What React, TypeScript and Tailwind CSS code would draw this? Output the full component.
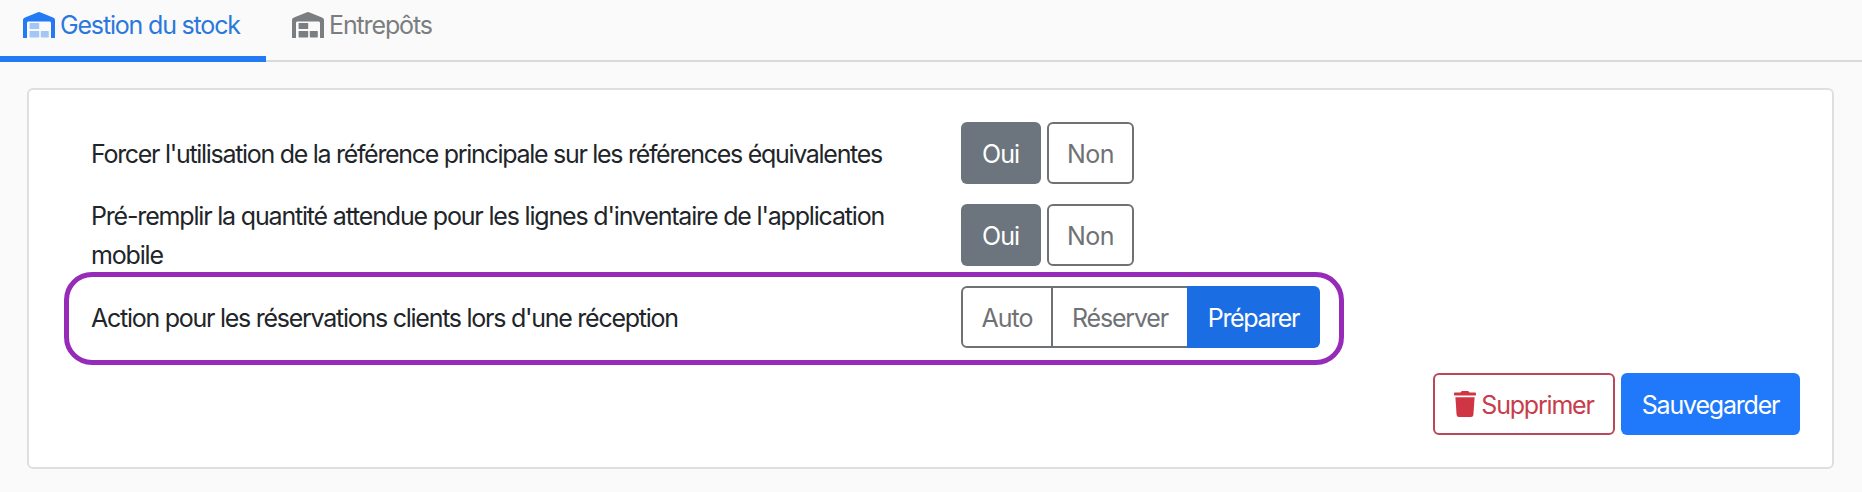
import type { ReactNode } from "react";

function WarehouseIcon({ duotone = false }: { duotone?: boolean }) {
  return (
    <svg viewBox="0 0 32 26" className="h-[26px] w-8 shrink-0" fill="currentColor" aria-hidden="true">
      <path d="M0 25.5V8.2C0 6.8.8 5.900 2 5.400L15 .3a3 3 0 0 1 2 0L30 5.400c1.200.5 2 1.400 2 2.800V25.500a.5.500 0 0 1-.5.500H28.500a.5.500 0 0 1-.5-.5V11c0-1-.6-1.600-1.600-1.600H5.600C4.600 9.400 4 10 4 11V25.500a.5.500 0 0 1-.5.500H.5a.5.500 0 0 1-.5-.5Z" />
      <g opacity={duotone ? 0.4 : 1}>
        <rect x="6.600" y="11" width="9.600" height="6" rx=".6" />
        <rect x="6.600" y="19" width="9.600" height="6.400" rx=".6" />
        <rect x="17.800" y="19" width="8" height="6.400" rx=".6" />
      </g>
    </svg>
  );
}

function TrashIcon() {
  return (
    <svg viewBox="0 0 22 26" className="h-[26px] w-[22px] shrink-0" fill="currentColor" aria-hidden="true">
      <path d="M.8 1.500H6.500L7.200.6C7.500.2 7.900 0 8.400 0h5.200c.5 0 .9.200 1.200.6l.7.900h5.700c.5 0 .8.300.8.800v1.400c0 .5-.3.800-.8.800H.8C.3 4.500 0 4.200 0 3.700V2.300c0-.5.3-.8.800-.8Z" />
      <path d="M1.400 6.300H20.600L19.400 23.700A2.500 2.500 0 0 1 17 26H5a2.500 2.500 0 0 1-2.400-2.300Z" />
    </svg>
  );
}

function SettingRow({ label, children }: { label: ReactNode; children: ReactNode }) {
  return (
    <div className="flex h-[82px] items-center">
      <div className="w-[870px] shrink-0 text-[#212529]">{label}</div>
      <div className="flex">{children}</div>
    </div>
  );
}

function YesNo() {
  return (
    <div className="flex gap-1.5">
      <button className="h-[62px] w-20 rounded-md bg-[#6c757d] pr-px pt-0.5 tracking-[-1px] text-white">Oui</button>
      <button className="h-[62px] w-[87px] rounded-md border-2 border-[#6f7274] pt-0.5 tracking-[-0.6px] text-[#6f7274]">Non</button>
    </div>
  );
}

export default function App() {
  return (
    <div className="h-[492px] w-[1862px] overflow-hidden bg-[#fafafa] font-['Inter',sans-serif] text-[25px] leading-[39px] tracking-[-1.2px]">
      <nav className="flex h-[62px] border-b-2 border-[#d7dadc]">
        <div className="flex h-[62px] w-[266px] shrink-0 items-start gap-[5px] border-b-[6px] border-[#247af4] pl-[23px] pt-[6px] text-[#2b78dc]">
          <span className="pt-[6px] text-[#247af4]"><WarehouseIcon duotone /></span>
          <span className="whitespace-nowrap tracking-[-1.18px]">Gestion du stock</span>
        </div>
        <div className="flex items-start gap-[5px] pl-[26px] pt-[6px] text-[#7b7e80]">
          <span className="pt-[6px]"><WarehouseIcon /></span>
          <span className="whitespace-nowrap tracking-[-1.13px]">Entrepôts</span>
        </div>
      </nav>
      <main className="relative ml-[27px] mt-[26px] h-[381px] w-[1807px] rounded-md border-2 border-[#dfdfdf] bg-white pl-[62px] pr-8 pt-[22px]">
        <SettingRow label={<p className="pt-0.5 tracking-[-1.3px]">Forcer l'utilisation de la référence principale sur les références équivalentes</p>}>
          <YesNo />
        </SettingRow>
        <SettingRow label={<p className="pt-px tracking-[-1.18px]">Pré-remplir la quantité attendue pour les lignes d'inventaire de l'application<br />mobile</p>}>
          <YesNo />
        </SettingRow>
        <SettingRow label={<p className="pt-0.5 tracking-[-1.26px]">Action pour les réservations clients lors d'une réception</p>}>
          <button className="h-[62px] w-[92px] rounded-l-md border-2 border-[#6f7274] pt-0.5 tracking-[-1px] text-[#6f7274]">Auto</button>
          <button className="h-[62px] w-[134px] border-y-2 border-[#6f7274] pt-0.5 text-[#6f7274]">Réserver</button>
          <button className="h-[62px] w-[133px] rounded-r-md bg-[#1b6de3] pt-0.5 tracking-[-1.35px] text-white">Préparer</button>
        </SettingRow>
        <div className="mt-[15px] flex justify-end gap-1.5">
          <button className="flex h-[62px] w-[182px] items-center justify-center gap-[5px] rounded-md border-2 border-[#b9485b] text-[#c73d4b]">
            <span className="text-[#d03546]"><TrashIcon /></span>
            <span className="pt-0.5">Supprimer</span>
          </button>
          <button className="h-[62px] w-[179px] rounded-md bg-[#2079fb] pt-0.5 text-white">Sauvegarder</button>
        </div>
        <div className="pointer-events-none absolute left-[35px] top-[182px] h-[93px] w-[1280px] rounded-[28px] border-[5px] border-[#962bb9]" />
      </main>
    </div>
  );
}
